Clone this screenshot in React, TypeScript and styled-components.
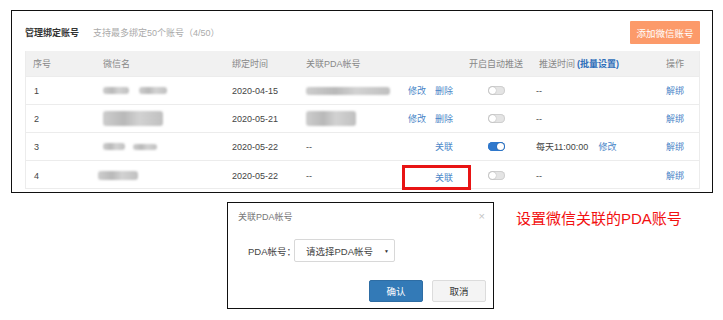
import React from 'react';
import styled, { createGlobalStyle } from 'styled-components';

const GlobalStyle = createGlobalStyle`
  html, body {
    margin: 0;
    padding: 0;
    background: #fff;
  }
  body {
    font-family: "Liberation Sans", "Noto Sans CJK SC", sans-serif;
    color: #333;
  }
`;

interface Row {
  no: number;
  name: { w: number; h: number; gap?: number }[];
  date: string;
  pda: { w: number; h: number }[] | null;
  actions: string[];
  on: boolean;
  time: string | null;
  highlight?: boolean;
}

const rows: Row[] = [
  {
    no: 1,
    name: [{ w: 26, h: 7 }, { w: 28, h: 7, gap: 10 }],
    date: '2020-04-15',
    pda: [{ w: 84, h: 8 }],
    actions: ['修改', '删除'],
    on: false,
    time: null,
  },
  {
    no: 2,
    name: [{ w: 60, h: 15 }],
    date: '2020-05-21',
    pda: [{ w: 50, h: 15 }],
    actions: ['修改', '删除'],
    on: false,
    time: null,
  },
  {
    no: 3,
    name: [{ w: 22, h: 7 }, { w: 24, h: 6, gap: 8 }],
    date: '2020-05-22',
    pda: null,
    actions: ['关联'],
    on: true,
    time: '每天11:00:00',
  },
  {
    no: 4,
    name: [{ w: 40, h: 9, gap: -5 }],
    date: '2020-05-22',
    pda: null,
    actions: ['关联'],
    on: false,
    time: null,
    highlight: true,
  },
];

const App: React.FC = () => {
  return (
    <Page>
      <GlobalStyle />
      <Panel>
        <PanelHead>
          <Title>管理绑定账号</Title>
          <Hint>支持最多绑定50个账号（4/50）</Hint>
          <AddButton>添加微信账号</AddButton>
        </PanelHead>
        <Table>
          <HeadRow>
            <Cell>序号</Cell>
            <Cell>微信名</Cell>
            <Cell>绑定时间</Cell>
            <Cell>关联PDA帐号</Cell>
            <Cell />
            <Cell $align="center">开启自动推送</Cell>
            <Cell $pad={7}>
              推送时间<Batch>(批量设置)</Batch>
            </Cell>
            <Cell $align="right">操作</Cell>
          </HeadRow>
          {rows.map((r) => (
            <BodyRow key={r.no}>
              <Cell $pad={8}>{r.no}</Cell>
              <Cell>
                {r.name.map((b, i) => (
                  <Blur key={i} style={{ width: b.w, height: b.h, marginLeft: b.gap }} />
                ))}
              </Cell>
              <Cell>{r.date}</Cell>
              <Cell>
                {r.pda ? r.pda.map((b, i) => <Blur key={i} style={{ width: b.w, height: b.h }} />) : '--'}
              </Cell>
              <Cell $align="right" $padR={r.highlight ? 0 : 7}>
                {r.highlight ? (
                  <RedBox>
                    <Link>{r.actions[0]}</Link>
                  </RedBox>
                ) : (
                  <Actions>
                    {r.actions.map((a) => (
                      <Link key={a}>{a}</Link>
                    ))}
                  </Actions>
                )}
              </Cell>
              <Cell $align="center">
                <Toggle $on={r.on} />
              </Cell>
              <Cell $pad={4}>
                {r.time ? (
                  <>
                    {r.time}
                    <Link style={{ marginLeft: 10 }}>修改</Link>
                  </>
                ) : (
                  '--'
                )}
              </Cell>
              <Cell $align="right">
                <Link>解绑</Link>
              </Cell>
            </BodyRow>
          ))}
        </Table>
      </Panel>

      <Bottom>
        <span />
        <Modal>
          <ModalHead>
            <ModalTitle>关联PDA帐号</ModalTitle>
            <Close>×</Close>
          </ModalHead>
          <FormRow>
            <Label>PDA帐号：</Label>
            <Select>
              <span>请选择PDA帐号</span>
              <Caret>▼</Caret>
            </Select>
          </FormRow>
          <ButtonRow>
            <Btn $primary>确认</Btn>
            <Btn>取消</Btn>
          </ButtonRow>
        </Modal>
        <Note>设置微信关联的PDA账号</Note>
      </Bottom>
    </Page>
  );
};

export default App;

const Page = styled.div`
  width: 723px;
  height: 320px;
  padding-top: 10px;
  box-sizing: border-box;
  overflow: hidden;
`;

const Panel = styled.div`
  margin-left: 11px;
  width: 702px;
  height: 183px;
  box-sizing: border-box;
  border: 1px solid #111;
  padding: 10px 12px 0 13px;
`;

const PanelHead = styled.div`
  display: flex;
  align-items: center;
  height: 23px;
  margin-bottom: 7px;
`;

const Title = styled.div`
  font-size: 9px;
  font-weight: bold;
  color: #333;
`;

const Hint = styled.div`
  margin-left: 14px;
  font-size: 9px;
  color: #aaa;
`;

const AddButton = styled.div`
  margin-left: auto;
  width: 70px;
  height: 23px;
  background: #fc9a6a;
  color: #fff;
  font-size: 9.5px;
  display: flex;
  align-items: center;
  justify-content: center;
  border-radius: 1px;
`;

const Table = styled.div`
  border: 1px solid #ececec;
  border-top: none;
`;

const cols = '70px 129px 74px 101px 60px 72px 108px 59px';

const HeadRow = styled.div`
  display: grid;
  grid-template-columns: ${cols};
  height: 25px;
  align-items: center;
  background: #f1f1f1;
  color: #888;
  font-size: 9px;
`;

const BodyRow = styled.div`
  display: grid;
  grid-template-columns: ${cols};
  height: 27px;
  align-items: center;
  border-top: 1px solid #ececec;
  font-size: 9px;
  color: #444;
`;

const Cell = styled.div<{ $align?: 'left' | 'center' | 'right'; $pad?: number; $padR?: number }>`
  display: flex;
  align-items: center;
  justify-content: ${(p) =>
    p.$align === 'center' ? 'center' : p.$align === 'right' ? 'flex-end' : 'flex-start'};
  padding-left: ${(p) => (p.$align === 'left' || !p.$align ? `${p.$pad ?? 7}px` : '0')};
  padding-right: ${(p) => (p.$align === 'right' ? `${p.$padR ?? 15}px` : '0')};
  height: 100%;
  white-space: nowrap;
`;

const Batch = styled.span`
  color: #2f6fba;
  font-weight: bold;
  margin-left: 2px;
`;

const Link = styled.span`
  color: #4a86c8;
`;

const Actions = styled.div`
  display: flex;
  gap: 9px;
`;

const RedBox = styled.div`
  width: 69px;
  height: 25px;
  margin-top: 4px;
  margin-right: -11px;
  box-sizing: border-box;
  border: 3px solid #e81414;
  padding-right: 15px;
  display: flex;
  align-items: center;
  justify-content: flex-end;
`;

const Blur = styled.span`
  display: inline-block;
  background: linear-gradient(90deg, #cdcdcd 0%, #b9b9b9 35%, #d2d2d2 60%, #c0c0c0 100%);
  filter: blur(1.2px);
  border-radius: 3px;
`;

const Toggle = styled.span<{ $on: boolean }>`
  position: relative;
  display: inline-block;
  width: 17px;
  height: 9px;
  border-radius: 5px;
  background: ${(p) => (p.$on ? '#2f78cc' : '#e4e4e4')};
  box-shadow: inset 0 0 0 1px ${(p) => (p.$on ? '#2f78cc' : '#cfcfcf')};
  &::after {
    content: '';
    position: absolute;
    top: 1px;
    left: ${(p) => (p.$on ? '9px' : '1px')};
    width: 7px;
    height: 7px;
    border-radius: 50%;
    background: #fff;
    box-shadow: 0 0 1px rgba(0, 0, 0, 0.4);
  }
`;

const Bottom = styled.div`
  display: grid;
  grid-template-columns: 227px 267px 1fr;
  margin-top: 9px;
`;

const Modal = styled.div`
  width: 267px;
  height: 107px;
  box-sizing: border-box;
  border: 1px solid #111;
  padding: 0 7px 0 10px;
`;

const ModalHead = styled.div`
  display: flex;
  align-items: center;
  justify-content: space-between;
  height: 26px;
`;

const ModalTitle = styled.div`
  font-size: 9px;
  color: #777;
`;

const Close = styled.div`
  font-size: 11px;
  color: #c4c4c4;
  margin-right: 1px;
`;

const FormRow = styled.div`
  display: flex;
  align-items: center;
  margin-top: 10px;
  padding-left: 10px;
`;

const Label = styled.div`
  width: 46px;
  white-space: nowrap;
  font-size: 9.5px;
  color: #444;
`;

const Select = styled.div`
  width: 101px;
  height: 23px;
  box-sizing: border-box;
  border: 1px solid #d8d8d8;
  border-radius: 2px;
  display: flex;
  align-items: center;
  justify-content: space-between;
  padding: 0 5px 0 11px;
  font-size: 9.5px;
  color: #444;
`;

const Caret = styled.span`
  font-size: 5px;
  color: #333;
`;

const ButtonRow = styled.div`
  display: flex;
  justify-content: flex-end;
  gap: 9px;
  margin-top: 18px;
`;

const Btn = styled.div<{ $primary?: boolean }>`
  width: 54px;
  height: 22px;
  box-sizing: border-box;
  display: flex;
  align-items: center;
  justify-content: center;
  font-size: 9.5px;
  border-radius: 2px;
  background: ${(p) => (p.$primary ? '#337ab7' : '#f4f4f4')};
  color: ${(p) => (p.$primary ? '#fff' : '#333')};
  border: 1px solid ${(p) => (p.$primary ? '#2e6da4' : '#dcdcdc')};
`;

const Note = styled.div`
  padding-left: 22px;
  padding-top: 5px;
  font-size: 15px;
  color: #f21010;
  white-space: nowrap;
`;
